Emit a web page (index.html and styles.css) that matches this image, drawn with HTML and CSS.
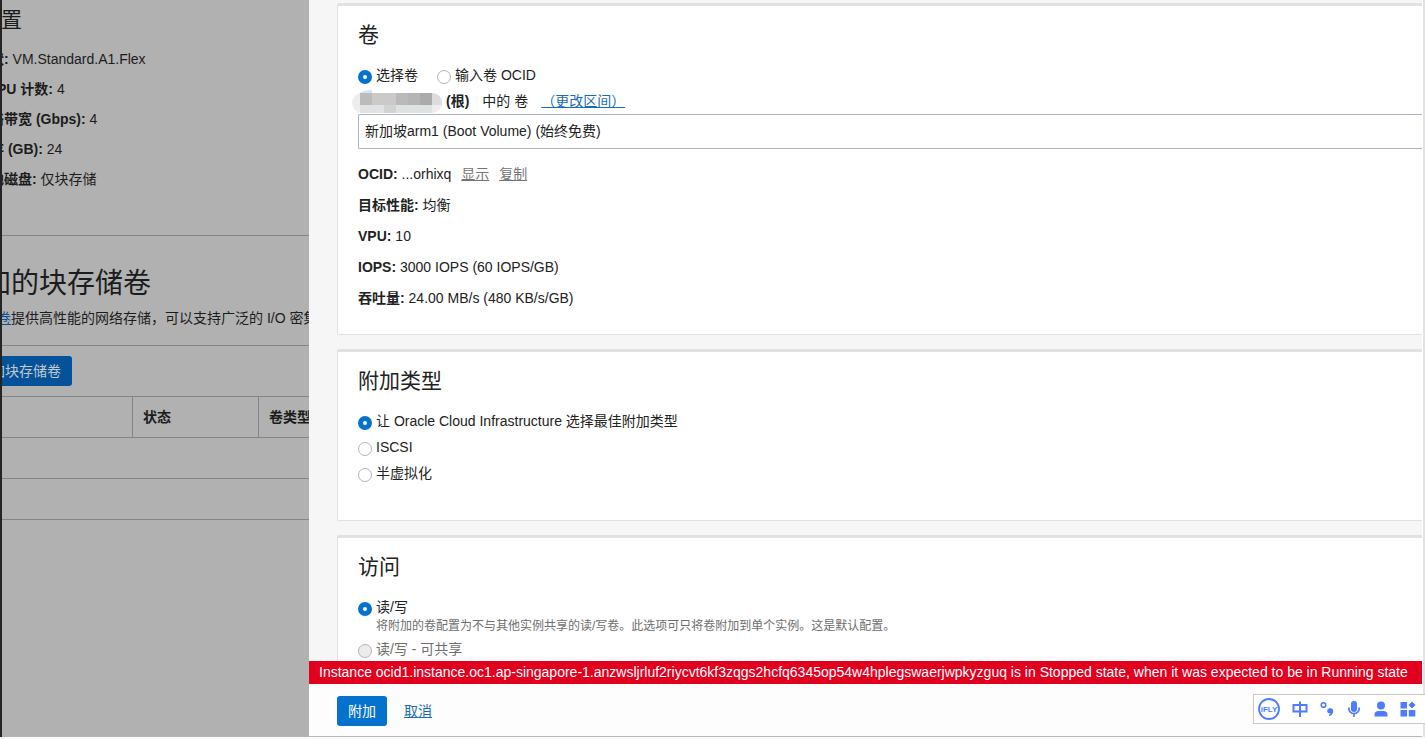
FILE: index.html
```html
<!DOCTYPE html>
<html lang="zh-CN">
<head>
<meta charset="utf-8">
<title>附加块存储卷</title>
<link rel="stylesheet" href="styles.css">
</head>
<body>
<div class="app">
  <main class="page">
    <div class="page-content">
      <section class="shape">
        <h2>配置</h2>
        <p><b>形状:</b> VM.Standard.A1.Flex</p>
        <p><b>OCPU 计数:</b> 4</p>
        <p><b>网络带宽 (Gbps):</b> 4</p>
        <p><b>内存 (GB):</b> 24</p>
        <p><b>本地磁盘:</b> 仅块存储</p>
      </section>
      <section class="volumes">
        <h1>附加的块存储卷</h1>
        <p class="intro"><a href="#">块存储卷</a>提供高性能的网络存储，可以支持广泛的 I/O 密集型应用</p>
        <div class="toolbar"><button type="button" class="btn">附加块存储卷</button></div>
        <table class="grid">
          <thead><tr><th class="col-name"></th><th class="col-state">状态</th><th>卷类型</th></tr></thead>
          <tbody>
            <tr><td colspan="3"></td></tr>
            <tr><td colspan="3"></td></tr>
          </tbody>
        </table>
      </section>
    </div>
  </main>

  <form class="drawer">
    <div class="drawer-body">
      <section class="card">
        <h2>卷</h2>
        <div class="choices">
          <div class="option"><label><input type="radio" name="source" checked>选择卷</label></div>
          <div class="option"><label><input type="radio" name="source">输入卷 OCID</label></div>
        </div>
        <div class="compartment">
          <svg class="mask" width="90" height="23" viewBox="0 0 90 23" aria-hidden="true">
            <path d="M8 3Q12 0 20 0V6H6Z" fill="#d3e5f3"/>
            <rect y="3" width="90" height="20" rx="10" fill="#ededed"/>
            <path d="M8 3H20V15H8Z" fill="#bdbaba"/>
            <path d="M20 3H44V15H20Z" fill="#cccac9"/>
            <path d="M44 3H56V15H44Z" fill="#bababa"/>
            <path d="M56 3H68V15H56Z" fill="#b5b5b5"/>
            <path d="M68 3H80V15H68Z" fill="#aaabab"/>
            <path d="M80 3Q90 4 90 13V15H80Z" fill="#dcdcdc"/>
            <path d="M8 15H32V23H8Z" fill="#e0e2e4"/>
            <path d="M32 15H44V23H32Z" fill="#d2d2d2"/>
            <path d="M44 15H80V23H44Z" fill="#dfe2e2"/>
          </svg>
          <b>(根)</b><span>中的 卷</span><a href="#">（更改区间）</a>
        </div>
        <input class="field" type="text" aria-label="卷" value="新加坡arm1 (Boot Volume) (始终免费)">
        <div class="details">
          <p><b>OCID:</b> ...orhixq <a href="#">显示</a> <a href="#">复制</a></p>
          <p><b>目标性能:</b> 均衡</p>
          <p><b>VPU:</b> 10</p>
          <p><b>IOPS:</b> 3000 IOPS (60 IOPS/GB)</p>
          <p><b>吞吐量:</b> 24.00 MB/s (480 KB/s/GB)</p>
        </div>
      </section>

      <section class="card card-type">
        <h2>附加类型</h2>
        <div class="option"><label><input type="radio" name="type" checked>让 Oracle Cloud Infrastructure 选择最佳附加类型</label></div>
        <div class="option"><label><input type="radio" name="type">ISCSI</label></div>
        <div class="option"><label><input type="radio" name="type">半虚拟化</label></div>
      </section>

      <section class="card">
        <h2>访问</h2>
        <div class="option">
          <label><input type="radio" name="access" aria-describedby="rw-help" checked>读/写</label>
          <p class="help" id="rw-help">将附加的卷配置为不与其他实例共享的读/写卷。此选项可只将卷附加到单个实例。这是默认配置。</p>
        </div>
        <div class="option disabled"><label><input type="radio" name="access" disabled>读/写 - 可共享</label></div>
      </section>
    </div>
    <div class="error" role="alert">Instance ocid1.instance.oc1.ap-singapore-1.anzwsljrluf2riycvt6kf3zqgs2hcfq6345op54w4hplegswaerjwpkyzguq is in Stopped state, when it was expected to be in Running state</div>
    <div class="actions">
      <button type="button" class="btn">附加</button>
      <a href="#">取消</a>
    </div>
  </form>
  <div class="rail"></div>
</div>

<div class="ime">
  <svg width="24" height="24" viewBox="0 0 24 24" role="img" aria-label="iFLY">
    <circle cx="12" cy="12" r="10" fill="none" stroke="#4e7bff" stroke-width="1.8"/>
    <text x="12" y="15" text-anchor="middle" class="ime-logo">iFLY</text>
  </svg>
  <svg width="16" height="16" viewBox="0 0 16 16" role="img" aria-label="中">
    <path d="M1.500 4H14.500V10.500H1.500ZM8 .5V16" fill="none" stroke="#4e7bff" stroke-width="2"/>
  </svg>
  <svg width="16" height="16" viewBox="0 0 16 16" aria-hidden="true">
    <circle cx="4.500" cy="4" r="2.300" fill="none" stroke="#4e7bff" stroke-width="1.600"/>
    <path d="M11.200 7.300a2.800 2.800 0 0 1 2.900 3c0 2.400-1.500 4.300-3.700 5l-.6-1.200c1-.4 1.600-1 1.800-1.800a2.600 2.600 0 1 1-.4-5Z" fill="#4e7bff"/>
  </svg>
  <svg width="16" height="16" viewBox="0 0 16 16" aria-hidden="true">
    <rect x="5" y="0" width="6" height="11" rx="3" fill="#4e7bff"/>
    <path d="M2.800 6.500v1a5.200 5.200 0 0 0 10.400 0v-1M8 12.500V16" fill="none" stroke="#4e7bff" stroke-width="1.700"/>
  </svg>
  <svg width="16" height="16" viewBox="0 0 16 16" aria-hidden="true">
    <circle cx="8" cy="4.500" r="4" fill="#4e7bff"/>
    <path d="M1.500 15.500v-1.500a4 4 0 0 1 4-4h5a4 4 0 0 1 4 4v1.500Z" fill="#4e7bff"/>
  </svg>
  <svg width="16" height="16" viewBox="0 0 16 16" aria-hidden="true">
    <path d="M.5 1H7V7.500H.5ZM.5 9H7V15.500H.5ZM8.800 9H15.300V15.500H8.800ZM12 .5L15.500 4L12 7.500L8.500 4Z" fill="#4e7bff"/>
  </svg>
</div>
</body>
</html>
```

FILE: styles.css
```css
* {
  box-sizing: border-box;
}

body {
  margin: 0;
  background: #fafafa;
  color: #222;
  font: 14px/30px "Liberation Sans", Arial, "Noto Sans CJK SC", sans-serif;
}

h1, h2, p {
  margin: 0;
  font-weight: 400;
}

h2 {
  font-size: 21px;
  line-height: 30px;
}

a {
  color: #1a6db5;
}

.app {
  display: grid;
  grid-template-rows: minmax(0, 1fr);
  grid-template-columns: 309px minmax(0, 1fr) 3px;
  height: 100vh;
  padding-bottom: 2px;
}

/* Page behind the drawer */
.page {
  overflow: hidden;
  border-left: 2px solid #242424;
  background: #b1b1b1;
  color: #1c1c1c;
}

.page-content {
  width: 720px;
  margin-left: -47px;
}

.shape {
  padding: 5px 0 41px 21px;
  border-bottom: 1px solid #838587;
}

.shape h2 {
  margin: 0 0 9px 4px;
}

.volumes h1 {
  padding-top: 29px;
  font-size: 28px;
  line-height: 38px;
}

.intro {
  padding-bottom: 12px;
  border-bottom: 1px solid #838587;
}

.page a {
  color: #0a5296;
}

.toolbar {
  display: flex;
  padding: 10px 0 10px 11px;
}

.btn {
  height: 30px;
  padding: 0 11px;
  border: 0;
  border-radius: 3px;
  background: #0572ce;
  color: #fff;
  font: inherit;
}

.page .btn {
  background: #04529a;
  color: #c4c9ce;
}

.grid {
  width: 100%;
  border-collapse: collapse;
  table-layout: fixed;
}

.grid th,
.grid td {
  height: 41px;
  padding: 0 10px;
  border: 1px solid #838587;
  text-align: left;
}

.col-name {
  width: 177px;
}

.col-state {
  width: 126px;
}

/* Drawer */
.drawer {
  display: flex;
  flex-direction: column;
  min-width: 0;
  border-bottom: 1px solid #b9b9b9;
  background: #f6f6f6;
}

.drawer-body {
  display: flex;
  flex: 1;
  flex-direction: column;
  gap: 14px;
  min-height: 0;
  padding: 3px 0 0 28px;
  overflow: hidden;
}

.card {
  flex: none;
  padding: 14px 0 20px 20px;
  border: solid #e1e1e1;
  border-width: 3px 0 1px 1px;
  border-radius: 2px 0 0 2px;
  background: #fff;
}

.card-type {
  padding-bottom: 34px;
}

.card h2 {
  margin-bottom: 12px;
}

.choices {
  display: flex;
  gap: 19px;
}

.option {
  padding: 2px 0;
  line-height: 22px;
}

.option label {
  display: flex;
  align-items: center;
  gap: 4px;
}

.option input {
  appearance: none;
  width: 14px;
  height: 14px;
  margin: 3px 0 0;
  border: 1px solid #b4b4b4;
  border-radius: 50%;
  background: #fff;
}

.option input:checked {
  border: 5px solid #0572ce;
}

.option input:disabled {
  background: #ececee;
}

.disabled {
  color: #6e6e6e;
}

.help {
  padding-left: 18px;
  color: #6e6e6e;
  font-size: 12px;
  line-height: 16px;
}

.compartment {
  display: flex;
  align-items: center;
  height: 26px;
  margin-left: -6px;
}

.mask {
  margin-right: 4px;
}

.compartment span {
  margin: 0 13px;
}

.field {
  display: block;
  width: 100%;
  height: 35px;
  padding: 0 6px 3px;
  border: 1px solid #a9b3bf;
  border-right: 0;
  border-radius: 2px 0 0 2px;
  background: #fff;
  color: inherit;
  font: inherit;
}

.details {
  margin-top: 10px;
  line-height: 31px;
}

.details a {
  margin-left: 6px;
  color: #757575;
}

.error {
  flex: none;
  padding: 0 10px;
  background: #e2001f;
  color: #fff;
  line-height: 23px;
  white-space: nowrap;
}

.actions {
  display: flex;
  flex: none;
  align-items: center;
  gap: 17px;
  padding: 12px 28px 10px;
  background: #fdfdfd;
}

.rail {
  border-left: 1px solid #fff;
  background: #e3e3e3;
}

/* Floating input-method bar */
.ime {
  position: fixed;
  right: 0;
  bottom: 15px;
  display: flex;
  align-items: center;
  gap: 11px;
  padding: 2px 9px 2px 3px;
  border: 1px solid #c8c8c8;
  border-right: 0;
  background: #fff;
}

.ime svg {
  display: block;
}

.ime-logo {
  fill: #4e7bff;
  font-size: 8px;
  font-weight: 700;
}
```
